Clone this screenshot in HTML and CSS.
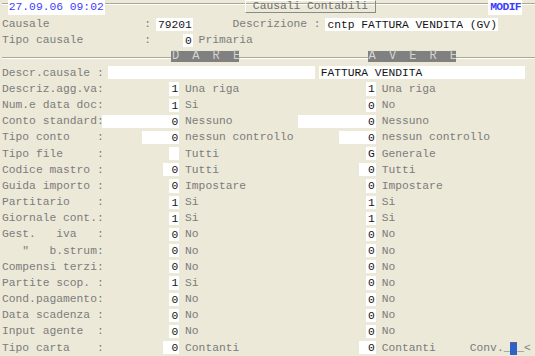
FILE: index.html
```html
<!DOCTYPE html>
<html lang="it">
<head>
    <meta charset="UTF-8">
    <title>Causali Contabili</title>
    <link rel="stylesheet" href="styles.css">
</head>
<body>
    <div class="screen">
<div class="row top"> <span class="date">27.09.06 09:02</span>                     <span class="title"> Causali Contabili </span>                 <span class="modif">MODIF</span></div>
<div class="row">Causale              : <span class="f">79201</span>      Descrizione : <span class="f">cntp FATTURA VENDITA (GV)</span></div>
<div class="row">Tipo causale         :     <span class="f">0</span> Primaria</div>
<div class="row sep">                         <span class="bar dare">DARE</span>                   <span class="bar avere">AVERE</span></div>
<div class="row">Descr.causale : <span class="f">                              </span> <span class="f">FATTURA VENDITA               </span></div>
<div class="row">Descriz.agg.va:          <span class="f">1</span> Una riga                   <span class="f">1</span> Una riga</div>
<div class="row">Num.e data doc:          <span class="f">1</span> Si                         <span class="f">0</span> No</div>
<div class="row">Conto standard:<span class="f">          0</span> Nessuno          <span class="f">          0</span> Nessuno</div>
<div class="row">Tipo conto    :      <span class="f">    0</span> nessun controllo       <span class="f">    0</span> nessun controllo</div>
<div class="row">Tipo file     :          <span class="f"> </span> Tutti                      <span class="f">G</span> Generale</div>
<div class="row">Codice mastro :         <span class="f"> 0</span> Tutti                     <span class="f"> 0</span> Tutti</div>
<div class="row">Guida importo :          <span class="f">0</span> Impostare                  <span class="f">0</span> Impostare</div>
<div class="row">Partitario    :          <span class="f">1</span> Si                         <span class="f">1</span> Si</div>
<div class="row">Giornale cont.:          <span class="f">1</span> Si                         <span class="f">1</span> Si</div>
<div class="row">Gest.   iva   :          <span class="f">0</span> No                         <span class="f">0</span> No</div>
<div class="row">   "   b.strum:          <span class="f">0</span> No                         <span class="f">0</span> No</div>
<div class="row">Compensi terzi:          <span class="f">0</span> No                         <span class="f">0</span> No</div>
<div class="row">Partite scop. :          <span class="f">1</span> Si                         <span class="f">0</span> No</div>
<div class="row">Cond.pagamento:          <span class="f">0</span> No                         <span class="f">0</span> No</div>
<div class="row">Data scadenza :          <span class="f">0</span> No                         <span class="f">0</span> No</div>
<div class="row">Input agente  :          <span class="f">0</span> No                         <span class="f">0</span> No</div>
<div class="row">Tipo carta    :         <span class="f"> 0</span> Contanti                  <span class="f"> 0</span> Contanti     Conv._<span class="cursor"></span>_&lt;</div>
    </div>
</body>
</html>
```

FILE: styles.css
```css
body {
    margin: 0;
    background-color: #ece9d8;
}

.screen {
    width: 535px;
    height: 356px;
    overflow: hidden;
    padding-left: 2px;
    box-sizing: border-box;
    background-color: #ece9d8;
    font-family: "Liberation Mono", "Courier New", monospace;
    font-size: 11.3px;
    color: #7c7c7c;
}

.row {
    height: 16.18px;
    line-height: 16.18px;
    white-space: pre;
}

/* groove lines across the screen */
.top {
    background: linear-gradient(to bottom, transparent 3px, #aca899 3px, #aca899 4px, #fff 4px, #fff 5px, transparent 5px);
}

.sep {
    background: linear-gradient(to bottom, transparent 8px, #aca899 8px, #aca899 9px, #fff 9px, #fff 10px, transparent 10px);
}

/* input fields */
.f {
    background-color: #fff;
    color: #151515;
    padding: 0.5px 1px 0.7px 2px;
    margin: 0 -1px 0 -2px;
}

.date,
.modif {
    display: inline-block;
    vertical-align: top;
    height: 15px;
    line-height: 15px;
    background-color: #fff;
    color: #3c3cff;
    padding: 0 1px;
    margin: 0 -1px;
}

.modif {
    padding-left: 2px;
    margin-left: -2px;
    font-weight: bold;
    letter-spacing: -0.6px;
}

.title {
    display: inline-block;
    vertical-align: top;
    box-sizing: border-box;
    height: 13px;
    line-height: 11px;
    color: #6e6e6e;
    border: 1px solid;
    border-color: #fff #8a8a8a #8a8a8a #fff;
    margin: 0 -1px;
}

.bar {
    display: inline-block;
    vertical-align: top;
    box-sizing: border-box;
    margin-top: 2.5px;
    height: 11px;
    line-height: 11px;
    padding-left: 0.5px;
    background-color: #808080;
    color: #d6d3ca;
    font-size: 12px;
    letter-spacing: 13.1px;
}

.dare {
    width: 67.8px;
}

.avere {
    width: 88.1px;
}

.cursor {
    display: inline-block;
    vertical-align: top;
    margin-top: 2px;
    width: 1ch;
    height: 13px;
    box-sizing: border-box;
    border-top: 1px solid #666;
    background-color: #2f62c8;
}
```
